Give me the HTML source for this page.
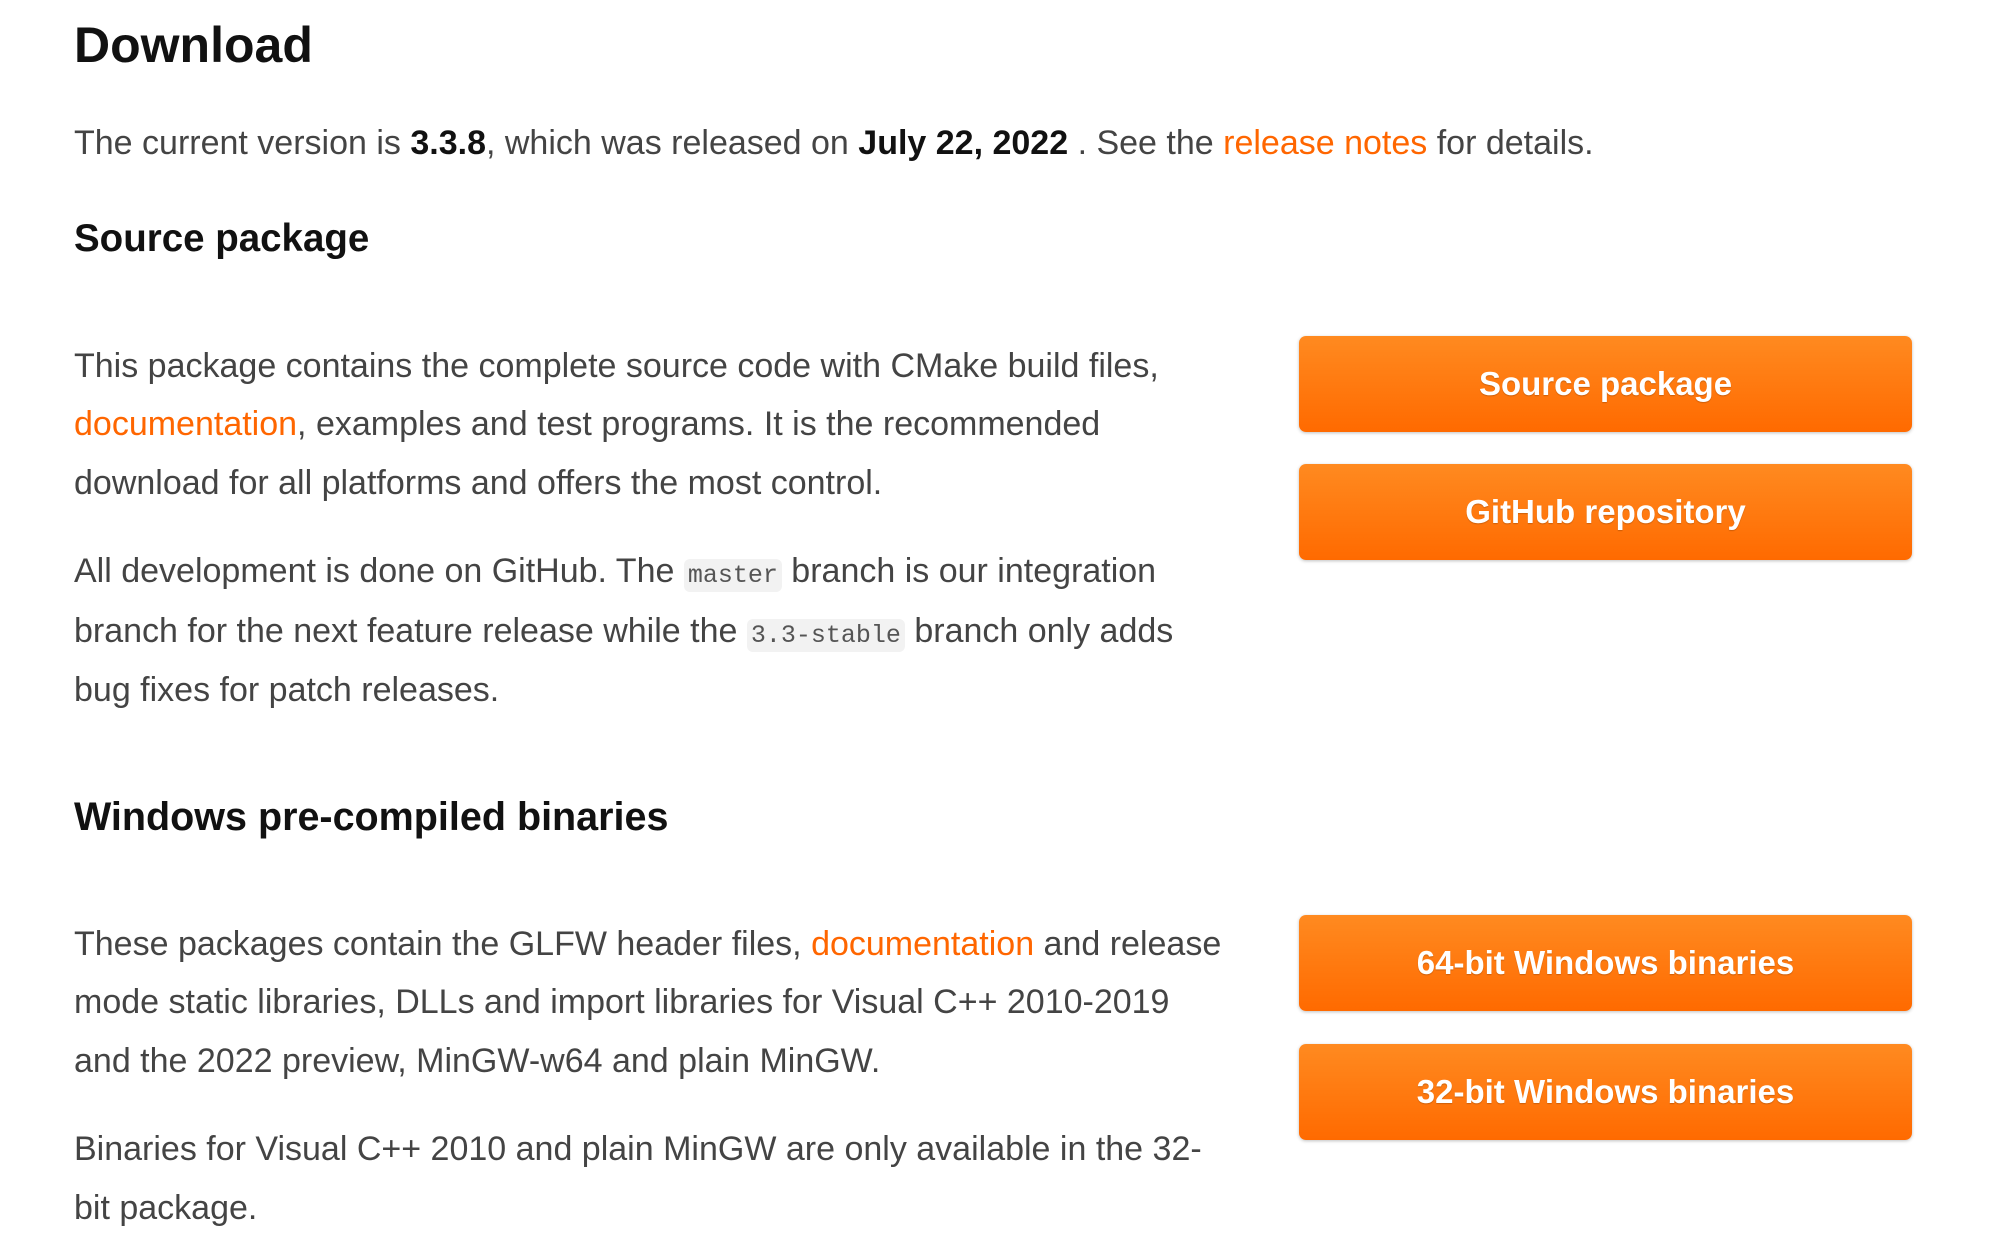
<!DOCTYPE html>
<html><head><meta charset="utf-8"><style>
body{margin:0;width:2003px;height:1253px;background:#fff;position:relative;overflow:hidden;font-family:"Liberation Sans",sans-serif;color:#444}
.t{position:absolute;left:74px;white-space:nowrap;font-size:34px;line-height:40px}
h1,h2{margin:0;position:absolute;left:74px;color:#111;font-weight:bold;white-space:nowrap}
h1{font-size:50px;top:16px}
h2{font-size:38.5px}
b{color:#111}
a{color:#ff6600;text-decoration:none}
code{font-family:"Liberation Mono",monospace;font-size:25px;background:#f2f2f2;border-radius:6px;padding:2px 4px;color:#555}
.btn{position:absolute;left:1299px;width:613px;height:96px;border-radius:7px;background:linear-gradient(#ff8a20,#ff6a00);box-shadow:0 1px 3px rgba(0,0,0,.25);color:#fff;font-weight:bold;font-size:33px;text-align:center;line-height:96px;text-shadow:0 1px 1px rgba(0,0,0,.2)}
</style></head><body>
<h1>Download</h1>
<div class="t" style="top:123px">The current version is <b>3.3.8</b>, which was released on <b>July 22, 2022</b> . See the <a>release notes</a> for details.</div>
<h2 style="top:217px">Source package</h2>
<div class="t" style="top:346px">This package contains the complete source code with CMake build files,</div>
<div class="t" style="top:404px"><a>documentation</a>, examples and test programs. It is the recommended</div>
<div class="t" style="top:463px">download for all platforms and offers the most control.</div>
<div class="t" style="top:551px">All development is done on GitHub. The <code>master</code> branch is our integration</div>
<div class="t" style="top:611px">branch for the next feature release while the <code>3.3-stable</code> branch only adds</div>
<div class="t" style="top:670px">bug fixes for patch releases.</div>
<h2 style="top:795px;font-size:39.5px">Windows pre-compiled binaries</h2>
<div class="t" style="top:924px">These packages contain the GLFW header files, <a>documentation</a> and release</div>
<div class="t" style="top:982px">mode static libraries, DLLs and import libraries for Visual C++ 2010-2019</div>
<div class="t" style="top:1041px">and the 2022 preview, MinGW-w64 and plain MinGW.</div>
<div class="t" style="top:1129px">Binaries for Visual C++ 2010 and plain MinGW are only available in the 32-</div>
<div class="t" style="top:1188px">bit package.</div>
<div class="btn" style="top:336px">Source package</div>
<div class="btn" style="top:464px">GitHub repository</div>
<div class="btn" style="top:915px">64-bit Windows binaries</div>
<div class="btn" style="top:1044px">32-bit Windows binaries</div>
</body></html>
